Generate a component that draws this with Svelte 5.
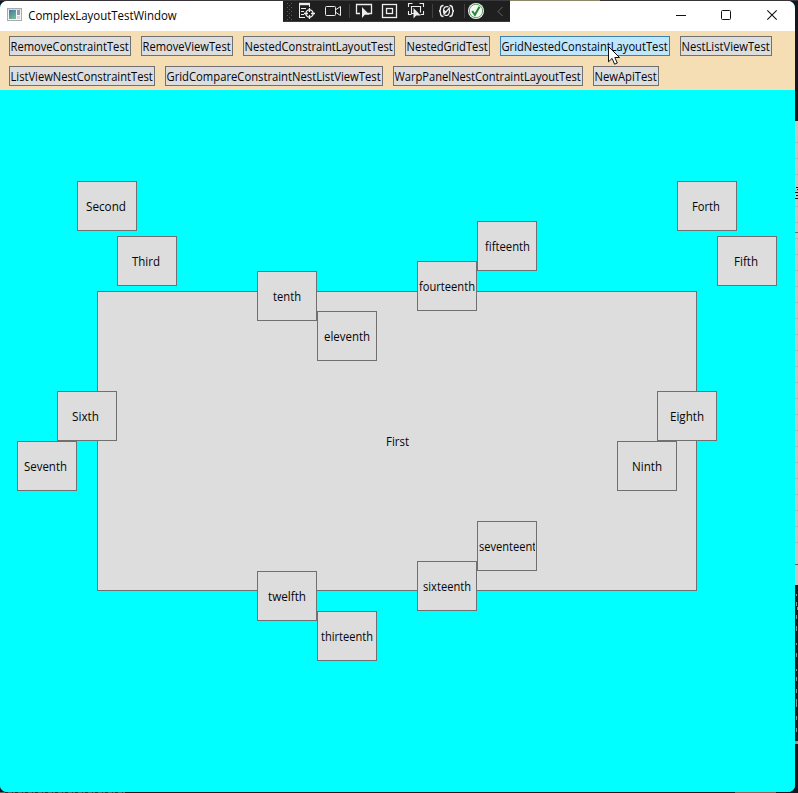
<script>
  const rows = [
    [
      { label: 'RemoveConstraintTest', w: 122 },
      { label: 'RemoveViewTest', w: 92 },
      { label: 'NestedConstraintLayoutTest', w: 152 },
      { label: 'NestedGridTest', w: 85 },
      { label: 'GridNestedConstaintLayoutTest', w: 170, hot: true },
      { label: 'NestListViewTest', w: 92 }
    ],
    [
      { label: 'ListViewNestConstraintTest', w: 146 },
      { label: 'GridCompareConstraintNestListViewTest', w: 218 },
      { label: 'WarpPanelNestContraintLayoutTest', w: 190 },
      { label: 'NewApiTest', w: 66 }
    ]
  ];

  // tx and tw: left edge and width of the label inside its box
  const nodes = [
    { label: 'First', x: 97, y: 291, w: 600, h: 300, tx: 288, tw: 23 },
    { label: 'Second', x: 77, y: 181, tx: 8, tw: 40 },
    { label: 'Third', x: 117, y: 236, tx: 14, tw: 28 },
    { label: 'Forth', x: 677, y: 181, tx: 14, tw: 28 },
    { label: 'Fifth', x: 717, y: 236, tx: 16, tw: 24 },
    { label: 'Sixth', x: 57, y: 391, tx: 14, tw: 27 },
    { label: 'Seventh', x: 17, y: 441, tx: 6, tw: 43 },
    { label: 'Eighth', x: 657, y: 391, tx: 12, tw: 34 },
    { label: 'Ninth', x: 617, y: 441, tx: 14, tw: 30 },
    { label: 'tenth', x: 257, y: 271, tx: 15, tw: 28 },
    { label: 'eleventh', x: 317, y: 311, tx: 6, tw: 46 },
    { label: 'twelfth', x: 257, y: 571, tx: 10, tw: 38 },
    { label: 'thirteenth', x: 317, y: 611, tx: 3, tw: 52 },
    { label: 'fourteenth', x: 417, y: 261, tx: 1, tw: 56 },
    { label: 'fifteenth', x: 477, y: 221, tx: 7, tw: 45 },
    { label: 'sixteenth', x: 417, y: 561, tx: 5, tw: 48 },
    { label: 'seventeenth', x: 477, y: 521, tx: 1, tw: 64, clip: true }
  ];
  const ticks = Array.from({ length: 26 }, (_, i) => 142 + i * 16);
</script>

<div class="screen">
  <svg class="backdrop" width="798" height="793" shape-rendering="crispEdges">
    <rect width="798" height="793" fill="#16141c" />
    <rect width="798" height="1" fill="#38343a" />
    <rect x="510" width="90" height="1" fill="#8d8768" />
    <rect x="795" y="121" width="3" height="464" fill="#c5c3c3" />
    {#each ticks as y}<rect x="795" {y} width="3" height="1" fill="#b3b1b1" />{/each}
    <rect x="795" y="232" width="3" height="1" fill="#6f6e72" />
    <path d="M796 187h2M797 189h1M795 192h3M796 195h2M795 198h3" stroke="#17131d" />
    <rect x="795" y="564" width="3" height="1" fill="#5f5e66" />
    <rect x="795" y="585" width="3" height="156" fill="#16211f" />
    <path d="M796 594v2m0 6v4m1 1v3m-1 5v4m0 7v5m0 12v2m0 8v4m0 12v2m0 6v4m0 8v4m0 6v8m0 9v4m0 8v4" stroke="#879290" />
    <rect x="795" y="741" width="3" height="3" fill="#98989c" />
    <rect x="0" y="792" width="125" height="1" fill="#536765" />
    <path d="M5 792.5h120" stroke="#283231" stroke-dasharray="3 4 1 2" />
    <rect x="735" y="792" width="41" height="1" fill="#a3564b" />
  </svg>

  <div class="window">
    <header>
      <svg class="appicon" width="16" height="14" viewBox="0 0 16 14">
        <defs>
          <linearGradient id="pane" x2="0.6" y2="1">
            <stop stop-color="#3e78a8" /><stop offset="1" stop-color="#73b795" />
          </linearGradient>
        </defs>
        <rect x=".5" y=".5" width="14" height="12" fill="#f5f5f5" stroke="#a5abb0" />
        <path d="M1 1.5h13" stroke="#d5d9dd" />
        <rect x="2" y="2" width="7" height="9" fill="url(#pane)" />
        <rect x="10" y="2" width="3" height="5" fill="#8d9fae" />
        <rect x="10" y="8" width="3" height="3" fill="#d4d9dc" />
      </svg>
      <svg class="title" width="170" height="30">
        <text x="-0.8" y="20" textLength="148.500" lengthAdjust="spacingAndGlyphs">ComplexLayoutTestWindow</text>
      </svg>
      <svg class="controls" width="120" height="30" fill="none" stroke="#111">
        <path d="M1 15.5h10" />
        <rect x="46.5" y="10.5" width="9" height="9" rx="1" />
        <path d="M92.3 10.3l9.4 9.4m0-9.4l-9.4 9.4" stroke-width="1.1" />
      </svg>
    </header>

    <nav>
      {#each rows as row}
        <div class="row">
          {#each row as b}
            <button class:hot={b.hot} style="width:{b.w}px">
              <svg width={b.w - 2} height="18">
                <text x="0.5" y="14" textLength={b.w - 3.8} lengthAdjust="spacingAndGlyphs">{b.label}</text>
              </svg>
            </button>
          {/each}
        </div>
      {/each}
    </nav>

    <main></main>
  </div>

  {#each nodes as n}
    <div class="node" style="left:{n.x}px;top:{n.y}px;width:{n.w ?? 60}px;height:{n.h ?? 50}px">
      <svg class:clip={n.clip} width={(n.w ?? 60) - 3} height={(n.h ?? 50) - 2}>
        <text x={n.tx} y={(n.h ?? 50) / 2 + 4} textLength={n.tw} lengthAdjust="spacingAndGlyphs">{n.label}</text>
      </svg>
    </div>
  {/each}

  <svg class="debugbar" width="227" height="22" fill="none" stroke="#ededed">
    <rect width="227" height="22" fill="#1f1f1f" stroke="none" />
    <path d="M0 .5h227M0 21.5h227" stroke="#3a3a3c" />
    <path d="M4.5 3v17M8.5 3v17" stroke="#5b5b5b" stroke-dasharray="1 3" />
    <path d="M6.5 5v15" stroke="#5b5b5b" stroke-dasharray="1 3" />
    <path d="M17 4.5h10M16.5 3v15M26.5 3v4" />
    <path d="M16 4h11" stroke-width="2.4" />
    <path d="M18 8.5h5M18 11.5h3M18 14.5h3M16 17.5h6" />
    <circle cx="26.5" cy="13.5" r="3.6" stroke-width="1.4" />
    <path d="M26.500 8v4M26.500 15v4M21 13.500h4M28 13.500h4" stroke-width="1.3" />
    <rect x="42.500" y="6.500" width="10" height="9" rx="1" />
    <path d="M53 9.500l4.500-3v9l-4.500-3" />
    <path d="M66.500 4v14M149.500 4v14M181.500 4v14" stroke="#414141" />
    <path d="M77 13.500h-3.500v-9h15v9h-4" stroke-width="1.3" />
    <path d="M79 7v11l2.800-3.200h4.700z" fill="#ededed" stroke="none" />
    <rect x="99.500" y="4.500" width="14" height="13" stroke-width="1.3" />
    <rect x="103.500" y="8.500" width="6" height="5" stroke-width="1.3" />
    <path d="M125.500 7V3.500h4M136.500 3.500h4V7M125.500 11v3.500h3M140.500 11v3.500h-3M131 13.500h-2.500v-7h9v6" stroke-width="1.1" />
    <path d="M130.500 8v10.500l2.700-3h4.500z" fill="#ededed" stroke="none" />
    <path d="M160.500 5.500q-3 0-3 3 0 2.500-1.500 2.500 1.500 0 1.500 2.500 0 3 3 3M166.500 5.500q3 0 3 3 0 2.500 1.500 2.500-1.500 0-1.500 2.500 0 3-3 3" stroke-width="1.4" />
    <path d="M165.500 6.800q-5-1-5 4.200 0 2 1 3M161.500 15.200q5 1 5-4.200 0-1-.5-2M160.500 14.500l6.500-7M161 10.500l2 2.500" stroke-width="1.3" />
    <circle cx="193" cy="11" r="8" fill="#f5f8f5" stroke="none" />
    <circle cx="193" cy="11" r="6.700" stroke="#55a65b" stroke-width="1" />
    <path d="M189.200 11l2.700 3.800 4.600-8" stroke="#268a33" stroke-width="2" />
    <path d="M219.500 7l-4.500 4.500 4.500 4.500" stroke="#666" />
  </svg>

  <svg class="cursor" width="14" height="21" viewBox="0 0 14 21">
    <path d="M1.500 1.500v15.300l3.600-3.400 2.500 5.800 2.700-1.200-2.500-5.500h4.700z" fill="#fff" stroke="#111" />
  </svg>
</div>

<style>
  .screen {
    position: relative;
    width: 798px;
    height: 793px;
    overflow: hidden;
    font: 12px "Open Sans", "Noto Sans", sans-serif;
  }
  svg {
    display: block;
    flex: none;
    overflow: visible;
  }
  text {
    fill: #050505;
    font: 12px "Open Sans", "Noto Sans", sans-serif;
    stroke: none;
  }
  .backdrop {
    position: absolute;
    inset: 0;
  }
  .window {
    position: relative;
    display: flex;
    flex-direction: column;
    width: 795px;
    height: 791px;
    margin-top: 1px;
    border-radius: 7px;
    overflow: hidden;
    background: #0ff;
    float: left;
  }
  header {
    display: flex;
    height: 30px;
    background: #fff;
  }
  .appicon {
    margin: 7px 6px 0 7px;
  }
  .title {
    margin-top: -1px;
  }
  .controls {
    margin: -1px 0 0 auto;
  }
  nav {
    box-sizing: border-box;
    height: 59px;
    padding: 5px 9px;
    background: #f5deb3;
    display: flex;
    flex-direction: column;
    gap: 10px;
  }
  .row {
    display: flex;
    gap: 10px;
  }
  button {
    box-sizing: border-box;
    height: 20px;
    flex: none;
    padding: 0;
    border: 1px solid #707070;
    border-radius: 0;
    background: #ddd;
  }
  button.hot {
    background: #bee6fd;
    border-color: #3c7fb1;
  }
  main {
    flex: 1;
    background: #0ff;
  }
  .node {
    position: absolute;
    box-sizing: border-box;
    border: 1px solid #707070;
    background: #ddd;
  }
  .node svg.clip {
    overflow: hidden;
  }
  .debugbar {
    position: absolute;
    left: 283px;
    top: 0;
  }
  .cursor {
    position: absolute;
    left: 607px;
    top: 45px;
  }
</style>
